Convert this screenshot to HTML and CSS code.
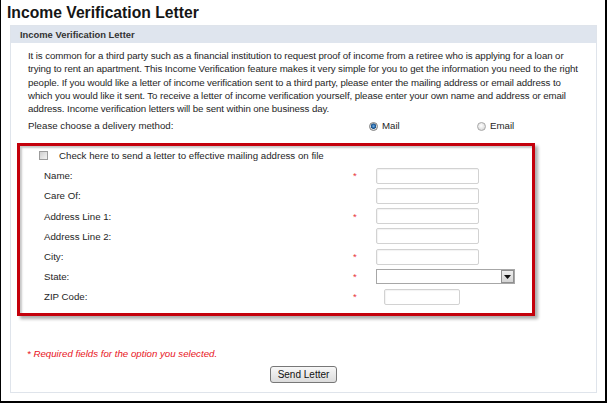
FILE: index.html
```html
<!DOCTYPE html>
<html lang="en">
<head>
<meta charset="utf-8">
<title>Income Verification Letter</title>
<link rel="stylesheet" href="styles.css">
</head>
<body>
<div class="frame">
  <h1 class="title">Income Verification Letter</h1>
  <section class="panel">
    <h2 class="panel-head">Income Verification Letter</h2>
    <div class="panel-body">
      <p class="intro">It is common for a third party such as a financial institution to request proof of income from a retiree who is applying for a loan or<br>trying to rent an apartment. This Income Verification feature makes it very simple for you to get the information you need to the right<br>people. If you would like a letter of income verification sent to a third party, please enter the mailing address or email address to<br>which you would like it sent. To receive a letter of income verification yourself, please enter your own name and address or email<br>address. Income verification letters will be sent within one business day.</p>
      <div class="delivery">
        <span class="delivery-label">Please choose a delivery method:</span>
        <label class="opt"><input class="radio" type="radio" name="method" checked><span>Mail</span></label>
        <label class="opt"><input class="radio" type="radio" name="method"><span>Email</span></label>
      </div>
      <div class="address-box">
        <label class="check-row"><input class="check" type="checkbox"><span>Check here to send a letter to effective mailing address on file</span></label>
        <div class="fields">
          <span class="lbl">Name:</span><span class="req">*</span><input class="txt" type="text">
          <span class="lbl">Care Of:</span><span class="req"></span><input class="txt" type="text">
          <span class="lbl">Address Line 1:</span><span class="req">*</span><input class="txt" type="text">
          <span class="lbl">Address Line 2:</span><span class="req"></span><input class="txt" type="text">
          <span class="lbl">City:</span><span class="req">*</span><input class="txt" type="text">
          <span class="lbl">State:</span><span class="req">*</span>
          <div class="select">
            <select class="select-box"><option></option></select>
            <span class="select-btn"><svg width="7" height="4" viewBox="0 0 7 4"><path d="M0 0H7L3.5 4Z" fill="#111"/></svg></span>
          </div>
          <span class="lbl">ZIP Code:</span><span class="req">*</span><input class="txt zip" type="text">
        </div>
      </div>
      <p class="required">* Required fields for the option you selected.</p>
      <div class="actions"><button class="send" type="button">Send Letter</button></div>
    </div>
  </section>
</div>
</body>
</html>
```

FILE: styles.css
```css
html, body {
  margin: 0;
  padding: 0;
  background: #fff;
}

.frame {
  box-sizing: border-box;
  width: 607px;
  height: 403px;
  border-left: 1px solid #000;
  border-right: 2px solid #000;
  border-bottom: 2px solid #000;
  background: #fff;
  font-family: "Liberation Sans", Arial, sans-serif;
  font-size: 9.7px;
  color: #1e1e1e;
  overflow: hidden;
}

.title {
  margin: 0;
  padding: 3px 0 0 6px;
  height: 22px;
  box-sizing: border-box;
  font-size: 15.7px;
  line-height: 20px;
  font-weight: bold;
  color: #151515;
}

.panel {
  margin: 3px 8px 0 9px;
  border: 1px solid #dfe4eb;
}

.panel-head {
  margin: 0;
  padding-left: 9px;
  height: 17px;
  line-height: 17px;
  font-size: 9.4px;
  font-weight: bold;
  color: #333;
  background: #dfe5ee;
}

.panel-body {
  padding: 6px 6px 9px 6px;
}

.intro {
  margin: 0;
  padding-left: 11px;
  line-height: 13.3px;
  letter-spacing: -0.09px;
  white-space: nowrap;
}

.delivery {
  display: grid;
  grid-template-columns: 341px 108px auto;
  align-items: center;
  margin-top: 4px;
  padding-left: 11px;
  line-height: 13.3px;
}

.opt {
  display: flex;
  align-items: center;
  gap: 4px;
}

.radio {
  appearance: none;
  margin: 0;
  width: 9px;
  height: 9px;
  border-radius: 50%;
  border: 1px solid #a8a8a8;
  box-sizing: border-box;
  background: radial-gradient(circle at 45% 40%, #ffffff 0, #e6e6e6 3px, #cfcfcf 5px);
}

.radio:checked {
  border-color: #7d7d7d;
  background: radial-gradient(circle at 50% 45%, #7fb6e6 0, #2a6bab 1.6px, #174f86 2.4px, #d9d9d9 3px, #f2f2f2 4.5px);
}

.address-box {
  box-sizing: border-box;
  width: 518px;
  height: 173px;
  margin-top: 10px;
  border: 3px solid #c4000b;
  box-shadow: 3px 3px 3px rgba(0, 0, 0, 0.32), inset 2px 2px 2px rgba(0, 0, 0, 0.22);
}

.check-row {
  display: flex;
  align-items: center;
  gap: 11px;
  height: 20px;
  padding-left: 19px;
}

.check {
  appearance: none;
  margin: 0;
  width: 9px;
  height: 9px;
  box-sizing: border-box;
  border: 1px solid #9c9c9c;
  background: linear-gradient(135deg, #cfcfcf, #f3f3f3);
}

.fields {
  display: grid;
  grid-template-columns: 308px 24px auto;
  grid-auto-rows: 20.2px;
  align-items: center;
  padding-left: 24px;
  line-height: 13.3px;
}

.req {
  color: #e8333b;
  padding-left: 1px;
}

.txt {
  box-sizing: border-box;
  width: 103px;
  height: 16px;
  margin: 0;
  padding: 0 2px;
  border: 1px solid #d2d2d2;
  border-radius: 2px;
  background: #fff;
  box-shadow: inset 1px 1px 1px rgba(0, 0, 0, 0.05);
  font: inherit;
}

.zip {
  width: 76px;
  margin-left: 8px;
}

.select {
  box-sizing: border-box;
  display: flex;
  width: 139px;
  height: 15px;
  border: 1px solid #a7a7a7;
  background: #fff;
}

.select-box {
  appearance: none;
  flex: 1;
  min-width: 0;
  margin: 0;
  border: 0;
  background: transparent;
  font: inherit;
}

.select-btn {
  box-sizing: border-box;
  display: flex;
  align-items: center;
  justify-content: center;
  width: 13px;
  border: 1px solid #8f8f8f;
  background: linear-gradient(#eeeeee, #d4d4d4);
}

.required {
  margin: 31px 0 0 0;
  padding-left: 10px;
  line-height: 13.3px;
  font-style: italic;
  color: #e8141c;
}

.actions {
  display: flex;
  justify-content: center;
  margin-top: 6px;
}

.send {
  box-sizing: border-box;
  height: 17px;
  margin: 0;
  padding: 0 7px;
  border: 1px solid #777;
  border-radius: 3px;
  background: linear-gradient(#f7f7f7, #dcdcdc);
  font-family: "Liberation Sans", Arial, sans-serif;
  font-size: 10px;
  color: #111;
  line-height: 15px;
}
```
